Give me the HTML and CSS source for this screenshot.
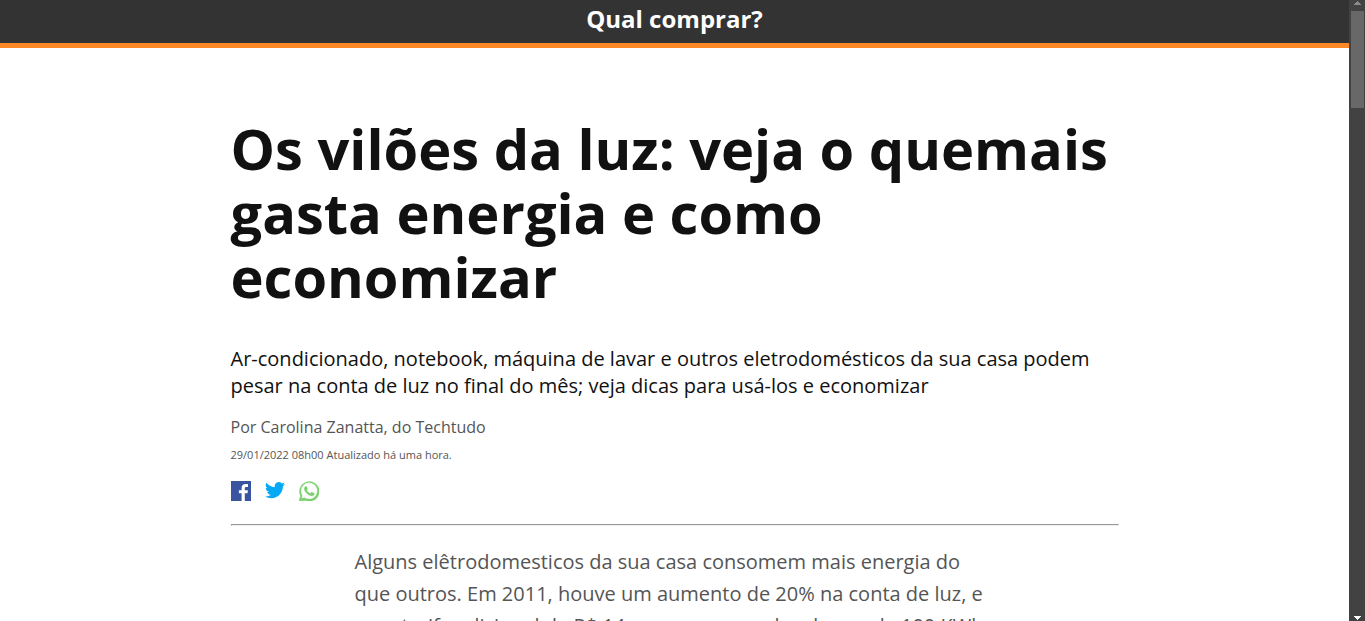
FILE: index.html
```html
<!DOCTYPE html>
<html lang="pt-BR">
<head>
<meta charset="utf-8">
<title>Qual comprar?</title>
<meta name="viewport" content="width=device-width, initial-scale=1">
<link rel="stylesheet" href="styles.css">
</head>
<body>
<div class="page">
  <header class="topbar"><h2 class="topbar-title">Qual comprar?</h2></header>
  <main class="article">
    <h1 class="headline">Os vilões da luz: veja o quemais gasta energia e como economizar</h1>
    <p class="summary">Ar-condicionado, notebook, máquina de lavar e outros eletrodomésticos da sua casa podem pesar na conta de luz no final do mês; veja dicas para usá-los e economizar</p>
    <p class="byline">Por Carolina Zanatta, do Techtudo</p>
    <p class="date">29/01/2022 08h00 Atualizado há uma hora.</p>
    <nav class="share" aria-label="Compartilhar">
      <a href="#facebook" aria-label="Facebook"><svg viewBox="0 0 20 20"><path fill="#3a559f" d="M0 0h20v20h-6.200v-7.700h2.700l.4-3h-3.100V7.400c0-.9.300-1.500 1.500-1.500h1.700V3.200c-.3 0-1.300-.1-2.400-.1-2.400 0-4 1.400-4 4.100v2.100H7.900v3h2.700V20H0z"/></svg></a>
      <a href="#twitter" aria-label="Twitter"><svg viewBox="0 1 24 24"><path fill="#03a9f4" d="M24 4.600a10 10 0 0 1-2.800.8 5 5 0 0 0 2.100-2.700 10 10 0 0 1-3.100 1.200 4.900 4.900 0 0 0-8.400 4.500A14 14 0 0 1 1.700 3.200a4.900 4.900 0 0 0 1.500 6.500 5 5 0 0 1-2.200-.6v.1a4.900 4.900 0 0 0 3.900 4.800 5 5 0 0 1-2.200.1 4.900 4.900 0 0 0 4.600 3.400A9.900 9.900 0 0 1 0 19.500a14 14 0 0 0 7.500 2.200c9.100 0 14-7.500 14-14V7.100A10 10 0 0 0 24 4.600z"/></svg></a>
      <a href="#whatsapp" aria-label="WhatsApp"><svg viewBox="0 0 24 24"><path fill="#7ad06d" stroke="#7ad06d" stroke-width=".4" d="M.1 24l1.700-6.200A11.900 11.900 0 1 1 7.700 23.400zM6.700 20.100l.3.200a9.900 9.900 0 1 0-3.300-3.300l.2.400-1 3.600zM17.500 14.400c-.3-.2-1.800-.9-2-1-.3-.1-.5-.1-.7.200l-.9 1.100c-.2.200-.3.200-.6.100a8 8 0 0 1-4-3.500c-.2-.3 0-.5.100-.6l.5-.5.300-.5v-.5l-.9-2.200c-.2-.6-.5-.5-.7-.5h-.5c-.2 0-.5.100-.8.400a3.300 3.300 0 0 0-1 2.500c0 1.500 1.100 2.900 1.200 3.100s2.100 3.200 5.100 4.500c3 1.200 3 .8 3.500.8.600-.1 1.800-.7 2-1.400.3-.7.300-1.300.2-1.400z"/></svg></a>
    </nav>
    <hr class="divider">
    <p class="body-text">Alguns elêtrodomesticos da sua casa consomem mais energia do que outros. Em 2011, houve um aumento de 20% na conta de luz, e uma tarifa adicional de R$ 14 passou a ser cobrado a cada 100 KWh</p>
  </main>
</div>
<div class="scrollbar" aria-hidden="true">
  <svg class="arrow" viewBox="0 0 7 4"><path fill="#8b8b8b" d="M3 0h1v1h1v1h1v1h1v1H0V3h1V2h1V1h1z"/></svg>
  <div class="thumb"></div>
  <svg class="arrow arrow-down" viewBox="0 0 7 4"><path fill="#fff" d="M0 0h7v1H6v1H5v1H4v1H3V3H2V2H1V1H0z"/></svg>
</div>
</body>
</html>
```
FILE: styles.css
```css
* { box-sizing: border-box; }
body {
  margin: 0;
  display: flex;
  height: 100vh;
  overflow: hidden;
  background: #fff;
  color: #111;
  font-family: "Open Sans", sans-serif;
}
.page { flex: 1; min-width: 0; overflow: hidden; }
.topbar {
  background: #333;
  border-bottom: 5px solid #ff8826;
  padding: 3px 0 8px;
  text-align: center;
}
.topbar-title { margin: 0; color: #fff; font-size: 24px; line-height: 32px; font-weight: 700; }
.article { width: 66%; max-width: 888px; margin: 0 auto; padding-top: 68px; }
.headline { margin: 0 0 37px; font-size: 56px; line-height: 64px; font-weight: 700; }
.summary { margin: 0 0 17px; font-size: 20px; line-height: 27px; }
.byline { margin: 0 0 9px; font-size: 16px; line-height: 22px; color: #555; }
.date { margin: 0 0 18px; font-size: 11px; line-height: 16px; color: #555; }
.share { display: flex; gap: 14px; }
.share a { display: block; width: 20px; height: 20px; }
.share svg { display: block; width: 100%; height: 100%; }
.divider {
  margin: 23px 0 20px;
  border: 1px solid #999;
  border-right-color: #eee;
  border-bottom-color: #eee;
}
.body-text { margin: 0 auto; max-width: 640px; font-size: 20px; line-height: 32px; color: #555; }
.scrollbar {
  flex: none;
  width: 16px;
  display: flex;
  flex-direction: column;
  align-items: center;
  background: #424242;
  padding: 1px 0;
}
.arrow { flex: none; width: 7px; height: 4px; }
.thumb { width: 13px; height: 97px; margin-top: 6px; background: #686868; }
.arrow-down { margin-top: auto; }
```
